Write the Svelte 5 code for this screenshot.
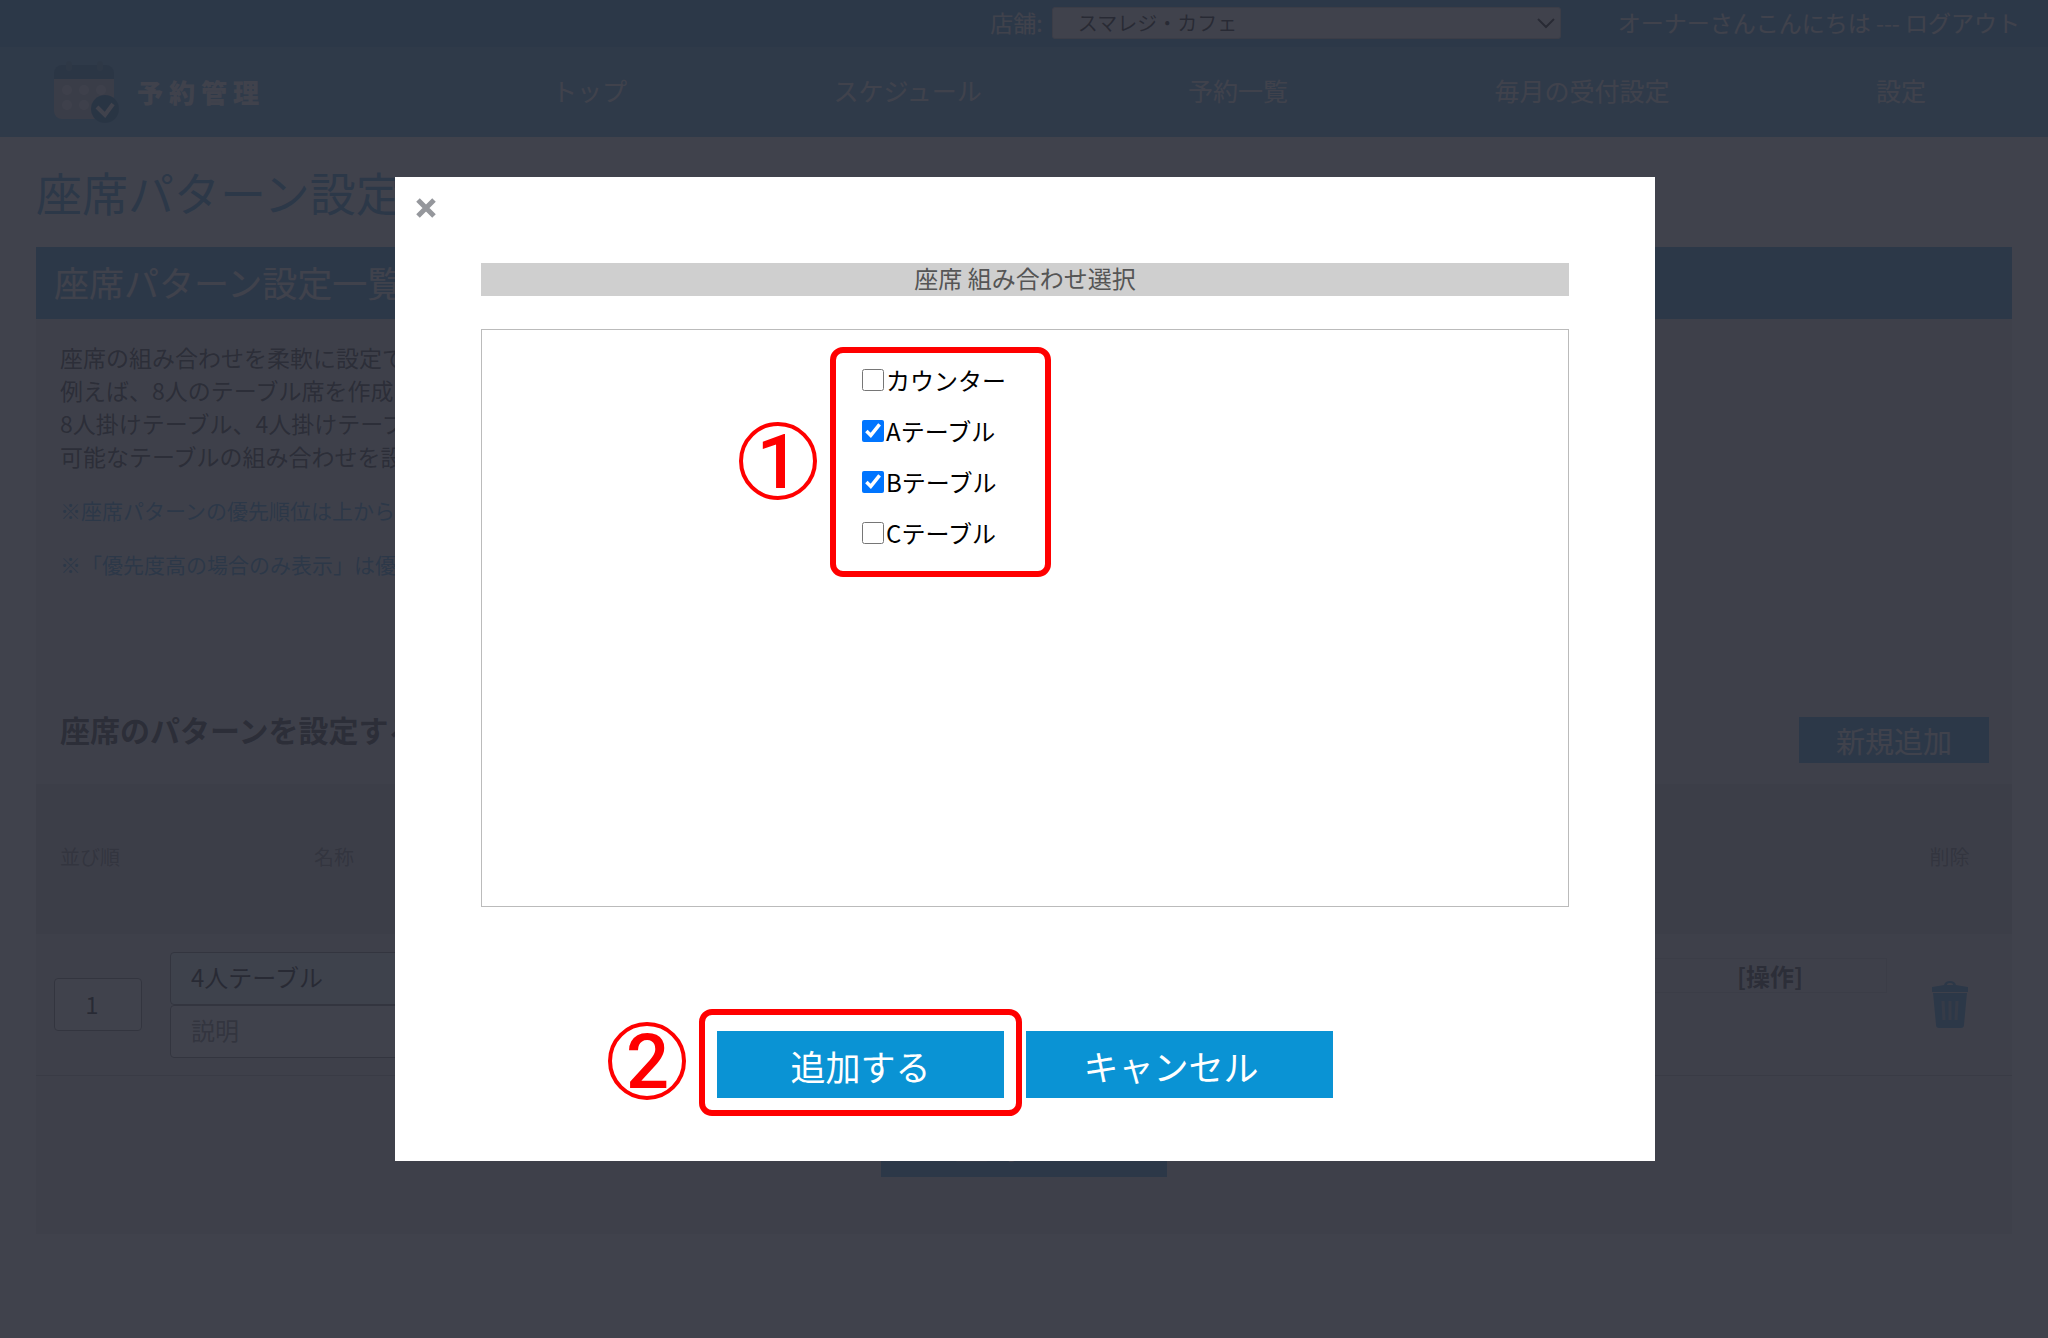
<script lang="ts">
  const menu = ["トップ", "スケジュール", "予約一覧", "毎月の受付設定", "設定"];

  let seats = $state([
    { name: "カウンター", checked: false },
    { name: "Aテーブル", checked: true },
    { name: "Bテーブル", checked: true },
    { name: "Cテーブル", checked: false },
  ]);

  let order = $state("1");
  let patternName = $state("4人テーブル");
  let description = $state("");
</script>

<div class="page">
  <header>
    <div class="topbar">
      <label for="store">店舗:</label>
      <div class="store">
        <select id="store">
          <option>スマレジ・カフェ</option>
        </select>
        <svg viewBox="0 0 18 12" aria-hidden="true">
          <path d="M1 1l8 8 8-8" fill="none" stroke="currentColor" stroke-width="2" />
        </svg>
      </div>
      <p class="user">オーナーさんこんにちは --- <a href="#logout">ログアウト</a></p>
    </div>
    <div class="navbar">
      <a class="brand" href="#top">
        <svg viewBox="0 0 66 62" aria-hidden="true">
          <path d="M1 18h60v32a8 8 0 0 1-8 8H9a8 8 0 0 1-8-8z" fill="#c0c8d0" />
          <path d="M9 4h44a8 8 0 0 1 8 8v6H1v-6a8 8 0 0 1 8-8z" fill="#2c84b8" />
          <rect x="13" y="0" width="6" height="10" rx="3" fill="#489cc4" />
          <rect x="44" y="0" width="6" height="10" rx="3" fill="#489cc4" />
          <g fill="#e8ecf4">
            <circle cx="14" cy="29" r="5" />
            <circle cx="31" cy="29" r="5" />
            <circle cx="48" cy="29" r="5" />
            <circle cx="14" cy="44" r="5" />
            <circle cx="31" cy="44" r="5" />
          </g>
          <circle cx="52" cy="48" r="14" fill="#1d7ab0" />
          <path d="M44 46l8 8 8-11" fill="none" stroke="#fff" stroke-width="4" />
        </svg>
        <span>予約管理</span>
      </a>
      <nav>
        {#each menu as item}
          <a href="#menu">{item}</a>
        {/each}
      </nav>
    </div>
  </header>

  <main>
    <h1>座席パターン設定</h1>
    <section>
      <h2>座席パターン設定一覧</h2>
      <div class="intro">
        <p>
          座席の組み合わせを柔軟に設定できます。<br />
          例えば、8人のテーブル席を作成する場合、<br />
          8人掛けテーブル、4人掛けテーブルなど、<br />
          可能なテーブルの組み合わせを設定します。
        </p>
        <p class="note">※座席パターンの優先順位は上から順になります。</p>
        <p class="note">※「優先度高の場合のみ表示」は優先されます。</p>
      </div>
      <div class="list-head">
        <h3>座席のパターンを設定する</h3>
        <button type="button">新規追加</button>
      </div>
      <table>
        <thead>
          <tr>
            <th class="col-order">並び順</th>
            <th class="col-name">名称</th>
            <th class="col-space"></th>
            <th class="col-action"></th>
            <th class="col-delete">削除</th>
          </tr>
        </thead>
        <tbody>
          <tr>
            <td><input class="order" type="text" aria-label="並び順" bind:value={order} /></td>
            <td>
              <input class="name" type="text" aria-label="名称" bind:value={patternName} />
              <input type="text" aria-label="説明" placeholder="説明" bind:value={description} />
            </td>
            <td></td>
            <td class="action"><div>[操作]</div></td>
            <td class="delete">
              <button type="button" aria-label="削除">
                <svg viewBox="0 0 36 47" aria-hidden="true">
                  <path
                    d="M12 4q1-4 6-4t6 4l12 2v5H0V6zM15 4h6q0-2-3-2t-3 2z"
                    fill="currentColor"
                    fill-rule="evenodd"
                  />
                  <path d="M1 12h34l-3 32q0 3-3 3H7q-3 0-3-3z" fill="currentColor" />
                  <path
                    d="M11 20l1 19M18 20v19M25 20l-1 19"
                    fill="none"
                    stroke="#98b8cc"
                    stroke-width="3"
                  />
                </svg>
              </button>
            </td>
          </tr>
        </tbody>
      </table>
      <div class="save">
        <button type="button">登録する</button>
      </div>
    </section>
  </main>
</div>

<div class="overlay">
  <div class="modal" role="dialog" aria-modal="true" aria-labelledby="dialog-title">
    <button class="close" type="button" aria-label="閉じる">
      <svg viewBox="0 0 20 20" aria-hidden="true">
        <path d="M2 2l16 16M18 2L2 18" stroke="currentColor" stroke-width="5" />
      </svg>
    </button>
    <h2 id="dialog-title">座席 組み合わせ選択</h2>
    <div class="choices">
      <ul>
        {#each seats as seat}
          <li>
            <label>
              <input type="checkbox" bind:checked={seat.checked} />
              <span>{seat.name}</span>
            </label>
          </li>
        {/each}
      </ul>
      <div class="mark mark-seats"><span>1</span></div>
    </div>
    <div class="buttons">
      <div class="confirm">
        <button type="button">追加する</button>
        <div class="mark mark-add"><span>2</span></div>
      </div>
      <button type="button">キャンセル</button>
    </div>
  </div>
</div>

<style>
  :global(body) {
    background: #fff;
    font-family: "Noto Sans CJK JP", sans-serif;
    font-size: 23px;
    line-height: 33px;
    color: #333;
  }

  h1,
  h2,
  h3,
  p,
  ul {
    margin: 0;
    padding: 0;
    font-weight: normal;
  }

  button,
  input,
  select {
    box-sizing: border-box;
    font: inherit;
    color: inherit;
  }

  button {
    border: none;
    border-radius: 0;
    padding: 0;
    background: #0a93d4;
    color: #fff;
    cursor: pointer;
  }

  a {
    color: inherit;
    text-decoration: none;
  }

  svg {
    display: block;
  }

  .page {
    min-height: 100vh;
  }

  .page button {
    background: #3b96d0;
  }

  .topbar {
    display: flex;
    align-items: center;
    justify-content: flex-end;
    box-sizing: border-box;
    height: 47px;
    padding: 0 28px 2px 0;
    background: #3b96d0;
    color: #fff;
  }

  .store {
    position: relative;
    width: 509px;
    margin: 0 57px 0 9px;
  }

  .store select {
    appearance: none;
    display: block;
    width: 100%;
    height: 32px;
    padding: 0 25px;
    border: 1px solid #ccc;
    border-radius: 3px;
    background: #fff;
    color: #111;
    font-size: 20px;
    line-height: 28px;
  }

  .store svg {
    position: absolute;
    top: 11px;
    right: 6px;
    width: 18px;
    color: #111;
  }

  .navbar {
    display: flex;
    align-items: center;
    box-sizing: border-box;
    height: 90px;
    padding: 0 122px 0 53px;
    background: #50aadf;
    color: #fff;
    font-size: 25px;
  }

  .brand {
    display: flex;
    align-items: center;
    gap: 18px;
    width: 499px;
    font-weight: 900;
    font-size: 26px;
  }

  .brand svg {
    width: 66px;
  }

  .brand span {
    padding-bottom: 2px;
    letter-spacing: 6px;
  }

  nav {
    display: flex;
    flex: 1;
    justify-content: space-between;
    padding-bottom: 4px;
  }

  main {
    padding: 20px 36px 104px;
  }

  h1 {
    color: #3b96d0;
    font-size: 46px;
    line-height: 68px;
    padding-bottom: 22px;
  }

  section {
    background: #ebebeb;
  }

  section h2 {
    padding: 0 18px 2px;
    background: #3b96d0;
    color: #fff;
    font-size: 35px;
    line-height: 70px;
  }

  .intro {
    box-sizing: border-box;
    height: 381px;
    padding: 22px 24px 0;
  }

  .note {
    margin-top: 21px;
    color: #3b96d0;
    font-size: 21px;
  }

  .list-head {
    display: flex;
    align-items: center;
    justify-content: space-between;
    box-sizing: border-box;
    height: 84px;
    padding: 0 23px 4px 24px;
  }

  .list-head h3 {
    padding-bottom: 22px;
    font-size: 30px;
    font-weight: bold;
  }

  .list-head button {
    width: 190px;
    height: 46px;
    font-size: 29px;
    line-height: 44px;
  }

  table {
    width: 100%;
    table-layout: fixed;
    border-collapse: collapse;
    border-bottom: 1px solid #bbb;
  }

  th {
    box-sizing: border-box;
    height: 150px;
    padding: 0 0 6px;
    background: #d8d8d8;
    color: #777;
    font-size: 20px;
    font-weight: normal;
  }

  td {
    height: 141px;
    padding: 0;
  }

  td input {
    display: block;
    width: 100%;
    height: 53px;
    padding: 0 20px 3px;
    border: 1px solid #777;
    border-radius: 4px;
    background: #fff;
    color: #111;
    font-size: 24px;
  }

  td input::placeholder {
    color: #777;
    opacity: 1;
  }

  td input.order {
    width: 88px;
    margin-left: 18px;
    padding-right: 32px;
    text-align: center;
  }

  td input.name {
    background: #e4f8fa;
  }

  .col-order {
    width: 134px;
    padding-left: 24px;
    text-align: left;
  }

  .col-name {
    width: 328px;
  }

  .col-action {
    width: 234px;
  }

  .col-delete {
    width: 125px;
  }

  .action {
    vertical-align: top;
    font-size: 24px;
    font-weight: bold;
    text-align: center;
  }

  .action div {
    margin-top: 24px;
    border: 1px solid #ccc;
  }

  .delete button {
    display: block;
    width: 36px;
    margin: 0 auto;
    background: none;
    color: #3b96d0;
  }

  .save {
    display: flex;
    justify-content: center;
    padding: 33px 0 57px;
  }

  .save button {
    width: 286px;
    height: 68px;
    font-size: 35px;
  }

  .overlay {
    position: fixed;
    inset: 0;
    display: flex;
    align-items: center;
    justify-content: center;
    padding-left: 2px;
    background: rgba(43, 45, 56, 0.9);
  }

  .modal {
    position: relative;
    box-sizing: border-box;
    width: 1260px;
    max-width: 100%;
    padding: 86px 86px 63px;
    background: #fff;
    color: #000;
  }

  .close {
    position: absolute;
    top: 21px;
    left: 21px;
    width: 20px;
    background: none;
    color: #95979c;
  }

  .modal h2 {
    padding-bottom: 4px;
    background: #cfcfcf;
    color: #555;
    font-size: 24px;
    line-height: 29px;
    text-align: center;
  }

  .choices {
    position: relative;
    box-sizing: border-box;
    height: 578px;
    margin: 33px 0 124px;
    padding-top: 24px;
    border: 1px solid #bbb;
    font-size: 24px;
  }

  .choices ul {
    width: 30%;
    margin: 0 auto;
    list-style: none;
  }

  .choices label {
    display: flex;
    align-items: center;
    gap: 2px;
    height: 51px;
  }

  .choices input {
    width: 22px;
    height: 22px;
    margin: 0;
    accent-color: #0075ff;
  }

  .buttons {
    display: flex;
    justify-content: center;
    gap: 22px;
  }

  .buttons button {
    display: block;
    height: 67px;
    padding: 0 73px;
    font-size: 35px;
    line-height: 69px;
  }

  .buttons > button {
    padding: 0 74px 0 58px;
  }

  .confirm {
    position: relative;
  }

  .mark {
    position: absolute;
    box-sizing: border-box;
    border: 6px solid #f00;
    border-radius: 13px;
    pointer-events: none;
  }

  .mark span {
    position: absolute;
    box-sizing: border-box;
    width: 78px;
    height: 78px;
    border: 4px solid #f00;
    border-radius: 50%;
    color: #f00;
    font-family: Roboto, sans-serif;
    font-size: 76px;
    font-weight: 500;
    line-height: 72px;
    text-align: center;
  }

  .mark-seats {
    top: 17px;
    left: calc(50% - 195px);
    width: 221px;
    height: 230px;
  }

  .mark-seats span {
    top: 69px;
    left: -97px;
  }

  .mark-add {
    inset: -22px -18px -18px;
  }

  .mark-add span {
    top: 7px;
    left: -97px;
  }
</style>
